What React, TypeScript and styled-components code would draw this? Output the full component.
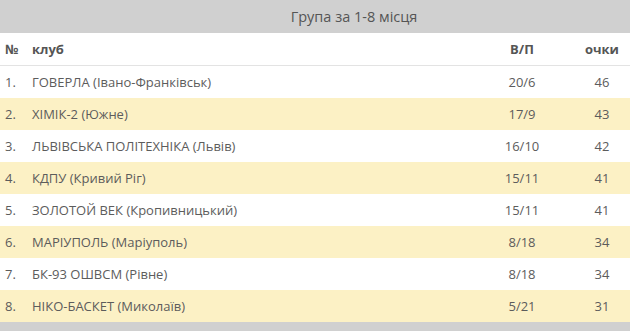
import React from "react";
import styled, { createGlobalStyle } from "styled-components";

const Global = createGlobalStyle`
  html, body { margin: 0; padding: 0; background: #fff; }
  body { font-family: "Open Sans", "Liberation Sans", sans-serif; }
`;

const Table = styled.div`
  width: 630px;
  display: flex;
  flex-direction: column;
  color: #555;
  font-size: 13px;
`;

const Title = styled.div`
  height: 33px;
  background: #d0d0d0;
  display: flex;
  align-items: center;
  justify-content: center;
  padding-left: 78px;
  color: #555;
  font-size: 14.5px;
`;

const Row = styled.div<{ $alt?: boolean; $head?: boolean }>`
  display: grid;
  grid-template-columns: 27px 1fr 104px 56px;
  padding-left: 5px;
  height: 32px;
  align-items: center;
  background: ${(p) => (p.$alt ? "#fcf1c5" : "#fff")};
  border-bottom: ${(p) => (p.$head ? "1px solid #e3e3e3" : "none")};
  font-weight: ${(p) => (p.$head ? 700 : 400)};
  color: ${(p) => (p.$head ? "#555" : "#5c5c5c")};
`;

const Cell = styled.div<{ $center?: boolean }>`
  text-align: ${(p) => (p.$center ? "center" : "left")};
  white-space: nowrap;
`;

const Footer = styled.div`
  height: 10px;
  background: #d0d0d0;
`;

const rows = [
  ["1.", "ГОВЕРЛА (Івано-Франківськ)", "20/6", "46"],
  ["2.", "ХІМІК-2 (Южне)", "17/9", "43"],
  ["3.", "ЛЬВІВСЬКА ПОЛІТЕХНІКА (Львів)", "16/10", "42"],
  ["4.", "КДПУ (Кривий Ріг)", "15/11", "41"],
  ["5.", "ЗОЛОТОЙ ВЕК (Кропивницький)", "15/11", "41"],
  ["6.", "МАРІУПОЛЬ (Маріуполь)", "8/18", "34"],
  ["7.", "БК-93 ОШВСМ (Рівне)", "8/18", "34"],
  ["8.", "НІКО-БАСКЕТ (Миколаїв)", "5/21", "31"],
];

export default function App() {
  return (
    <>
      <Global />
      <Table>
        <Title>Група за 1-8 місця</Title>
        <Row $head>
          <Cell>№</Cell>
          <Cell>клуб</Cell>
          <Cell $center>В/П</Cell>
          <Cell $center>очки</Cell>
        </Row>
        {rows.map((r, i) => (
          <Row key={i} $alt={i % 2 === 1}>
            <Cell>{r[0]}</Cell>
            <Cell>{r[1]}</Cell>
            <Cell $center>{r[2]}</Cell>
            <Cell $center>{r[3]}</Cell>
          </Row>
        ))}
        <Footer />
      </Table>
    </>
  );
}
